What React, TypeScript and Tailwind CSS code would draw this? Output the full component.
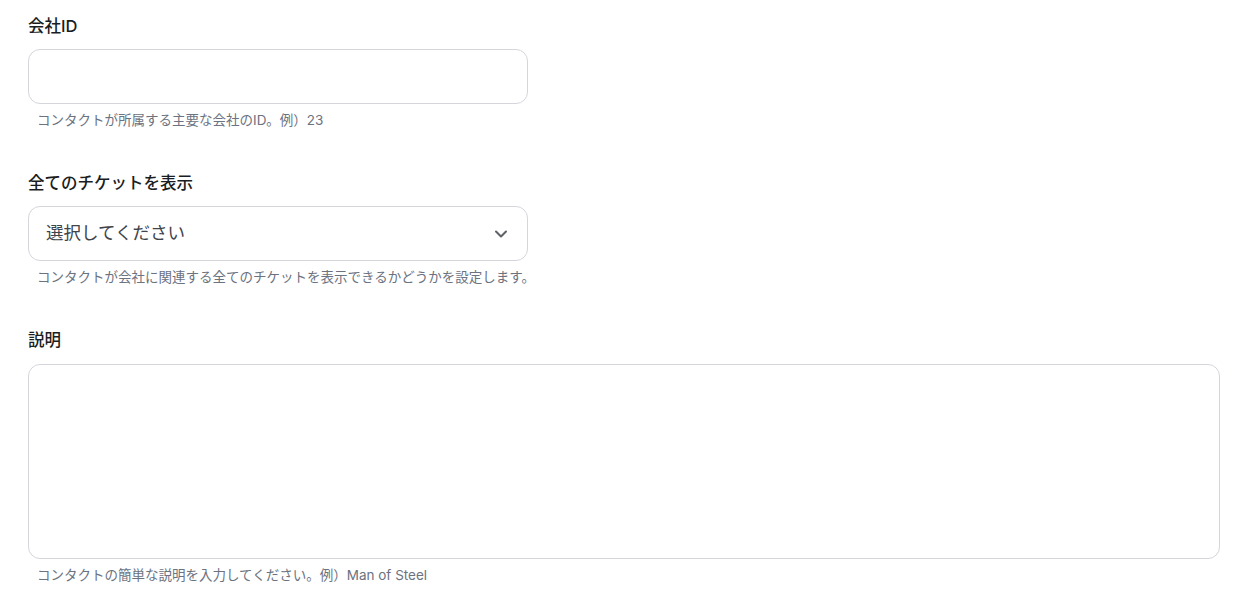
import {ChevronDown} from "lucide-react";

const font = {fontFamily: "Inter, 'Noto Sans CJK JP', sans-serif"};

function Field({label, help, children}: {label: string, help: string, children: React.ReactNode}) {
    return (
        <div className="flex flex-col">
            <label className="text-[16.5px] leading-6 font-medium text-[#1a1d21]">{label}</label>
            <div className="mt-[11px]">{children}</div>
            <p className="mt-[6px] pl-[9px] text-[13.5px] leading-5 text-[#6b7280]">{help}</p>
        </div>
    );
}

export default function App() {
    return (
        <div className="bg-white min-h-screen pl-7 pr-[37px] pt-[14px] flex flex-col gap-[41px]" style={font}>
            <Field label="会社ID" help="コンタクトが所属する主要な会社のID。例）23">
                <input className="w-[500px] h-[55px] rounded-xl border border-[#d4d6db] px-4 outline-none" />
            </Field>

            <Field label="全てのチケットを表示" help="コンタクトが会社に関連する全てのチケットを表示できるかどうかを設定します。">
                <div className="w-[500px] h-[55px] rounded-xl border border-[#d4d6db] pl-[17px] pr-[16px] flex items-center justify-between">
                    <span className="text-[17.5px] text-[#3f434a]">選択してください</span>
                    <ChevronDown size={20} strokeWidth={2.5} className="text-[#5f6368]" />
                </div>
            </Field>

            <Field label="説明" help="コンタクトの簡単な説明を入力してください。例）Man of Steel">
                <textarea className="mt-px w-full h-[195px] rounded-xl border border-[#d4d6db] p-4 outline-none resize-none block" />
            </Field>
        </div>
    );
}
